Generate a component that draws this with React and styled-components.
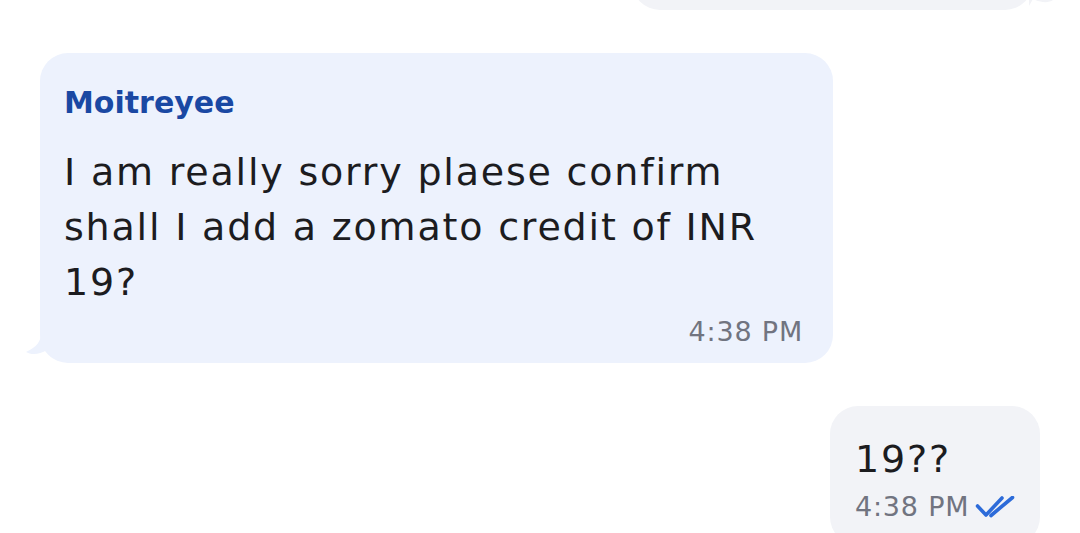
import styled, { createGlobalStyle } from 'styled-components'

const GlobalStyle = createGlobalStyle`
  html, body {
    margin: 0;
    padding: 0;
    background: #ffffff;
    overflow: hidden;
  }
  body {
    font-family: "DejaVu Sans", "Noto Sans", sans-serif;
    color: #1c1c1f;
  }
`

const messages = [
  { id: 1, mine: true, hidden: true },
  {
    id: 2,
    mine: false,
    author: 'Moitreyee',
    text: 'I am really sorry plaese confirm shall I add a zomato credit of INR 19?',
    time: '4:38 PM',
    tail: true,
  },
  { id: 3, mine: true, text: '19??', time: '4:38 PM', read: true },
]

function LeftTail() {
  return (
    <TailLeft width="26" height="24" viewBox="0 0 26 24">
      <path d="M16 0 C16 8 12 14 1 19 C6 22 14 22 22 17 L26 24 L26 0 Z" fill="#edf2fd" />
    </TailLeft>
  )
}

function RightTail() {
  return (
    <TailRight width="26" height="24" viewBox="0 0 26 24">
      <path d="M10 0 C10 8 14 14 24 18 C20 21 12 21 4 17 L0 24 L0 0 Z" fill="#f2f3f7" />
    </TailRight>
  )
}

function Ticks() {
  return (
    <TickIcon width="40" height="22" viewBox="0 0 40 22" fill="none">
      <path d="M2.5 10 L11 19 L27 2" stroke="#2d6bd9" strokeWidth="3.6" strokeLinecap="round" strokeLinejoin="round" />
      <path d="M16 19.5 L37.5 1.5" stroke="#2d6bd9" strokeWidth="3.6" strokeLinecap="round" />
    </TickIcon>
  )
}

function Message({ m }) {
  if (m.hidden) {
    return (
      <Row $mine>
        <Ghost>
          <RightTail />
        </Ghost>
      </Row>
    )
  }
  return (
    <Row $mine={m.mine}>
      <Bubble $mine={m.mine}>
        {m.author && <Author>{m.author}</Author>}
        <Text>{m.text}</Text>
        <Meta $mine={m.mine}>
          <Time>{m.time}</Time>
          {m.read && <Ticks />}
        </Meta>
        {m.tail && <LeftTail />}
      </Bubble>
    </Row>
  )
}

export default function App() {
  return (
    <>
      <GlobalStyle />
      <Thread>
        {messages.map((m) => (
          <Message key={m.id} m={m} />
        ))}
      </Thread>
    </>
  )
}

const Thread = styled.div`
  display: flex;
  flex-direction: column;
  gap: 43px;
  padding: 0 40px 0 40px;
  margin-top: -110px;
`

const Row = styled.div`
  display: flex;
  justify-content: ${(p) => (p.$mine ? 'flex-end' : 'flex-start')};
`

const Ghost = styled.div`
  position: relative;
  width: 401px;
  height: 120px;
  margin-right: 7px;
  background: #f2f3f7;
  border-radius: 28px;
`

const Bubble = styled.div`
  position: relative;
  box-sizing: border-box;
  width: ${(p) => (p.$mine ? '210px' : '793px')};
  padding: ${(p) => (p.$mine ? '26px 20px 20px 25px' : '28px 24px 13px')};
  background: ${(p) => (p.$mine ? '#f2f3f7' : '#edf2fd')};
  border-radius: 28px;
`

const Author = styled.div`
  font-size: 30px;
  font-weight: 700;
  line-height: 44px;
  color: #1a48a3;
  margin-bottom: 20px;
`

const Text = styled.div`
  font-size: 38px;
  line-height: 55px;
  letter-spacing: 1.8px;
  color: #1c1c1f;
`

const Meta = styled.div`
  display: flex;
  align-items: center;
  justify-content: ${(p) => (p.$mine ? 'flex-start' : 'flex-end')};
  gap: 6px;
  margin-top: ${(p) => (p.$mine ? '2px' : '4px')};
  padding-right: ${(p) => (p.$mine ? '0' : '6px')};
  white-space: nowrap;
`

const Time = styled.span`
  font-size: 27px;
  line-height: 36px;
  letter-spacing: 0.8px;
  color: #717480;
`

const TickIcon = styled.svg`
  flex-shrink: 0;
`

const TailLeft = styled.svg`
  position: absolute;
  left: -15px;
  bottom: 6px;
`

const TailRight = styled.svg`
  position: absolute;
  right: -22px;
  bottom: 4px;
`
